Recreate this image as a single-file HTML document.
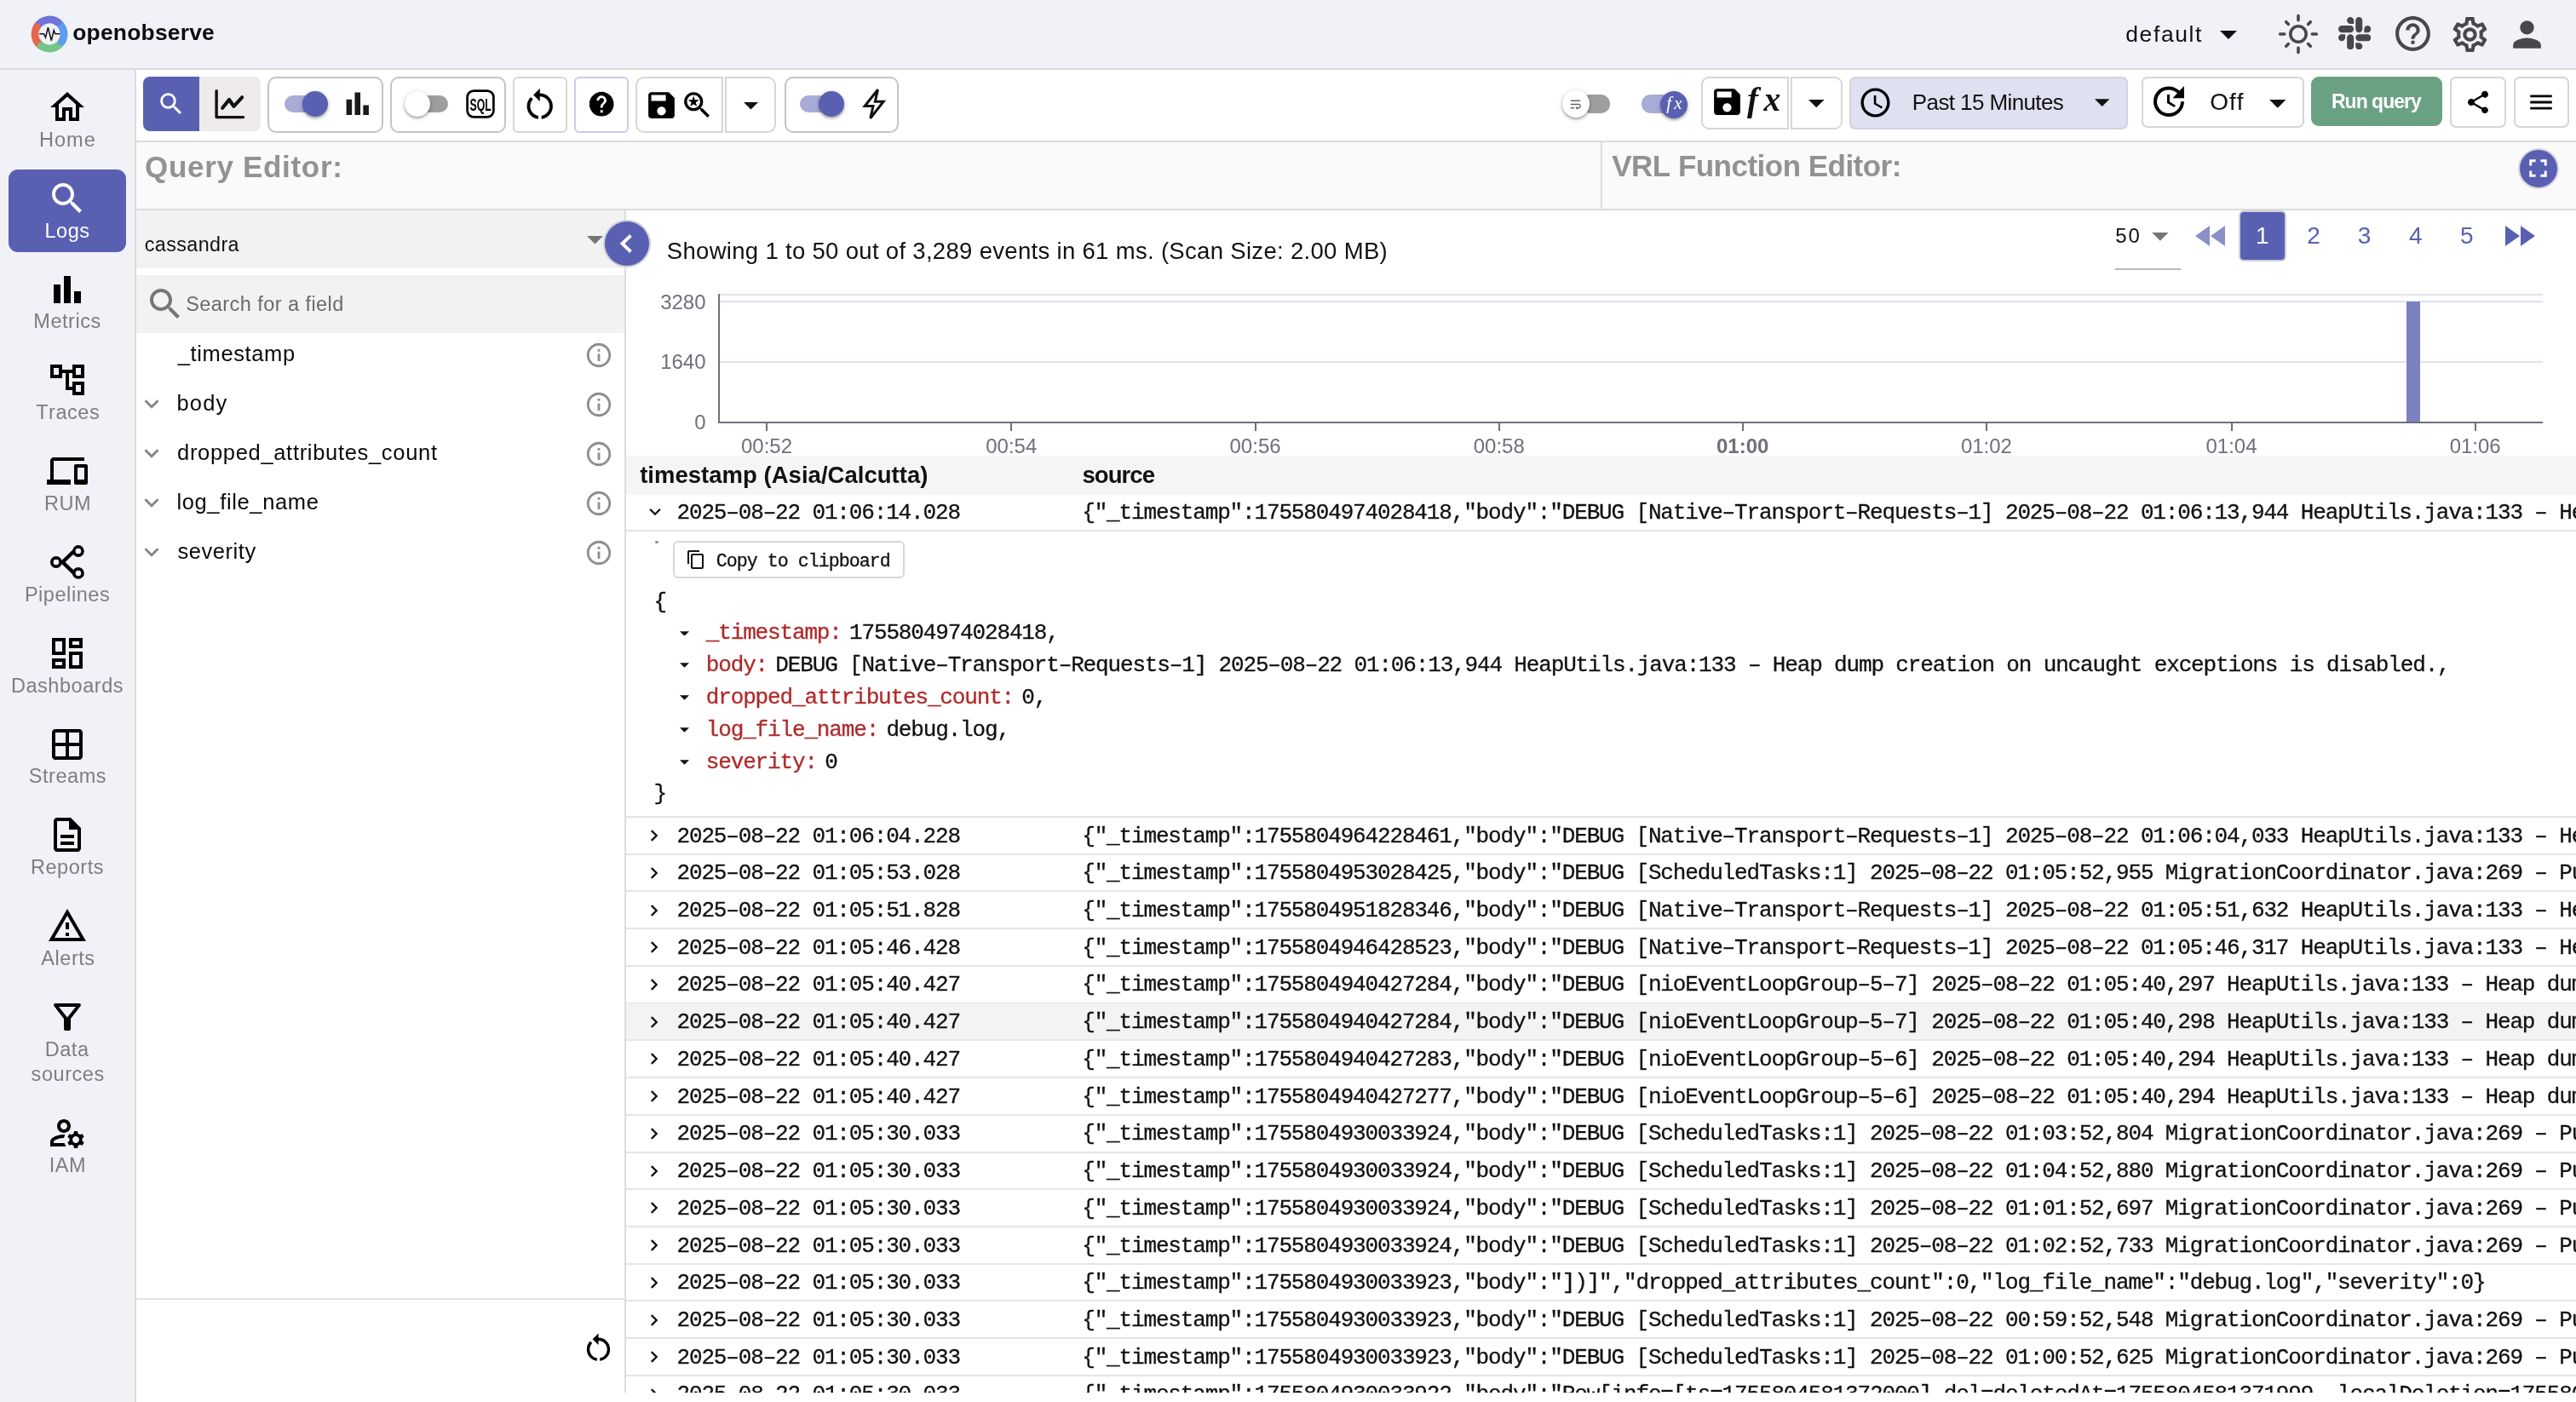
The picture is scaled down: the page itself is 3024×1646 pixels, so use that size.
<!DOCTYPE html>
<html><head><meta charset="utf-8"><title>OpenObserve</title><style>
html,body{margin:0;padding:0;background:#fff;}
body{width:3024px;height:1646px;overflow:hidden;position:relative;font-kerning:none;-webkit-font-smoothing:antialiased;}
#root{position:absolute;left:0;top:0;width:3024px;height:1646px;overflow:hidden;will-change:transform;transform:translateZ(0);}
.a{position:absolute;display:block;}
.t{position:absolute;white-space:pre;font-kerning:none;}
.s{font-family:"Liberation Sans",sans-serif;}
.m{font-family:"Liberation Mono",monospace;-webkit-text-stroke:0.3px;}
.r{font-family:"Liberation Serif",serif;}
</style></head><body><div id="root">
<div class="a" style="left:0px;top:0px;width:3024px;height:80px;background:#f1f2f8;"></div>
<div class="a" style="left:0px;top:80px;width:3024px;height:2px;background:#dbdbdb;"></div>
<div class="a" style="left:0px;top:82px;width:158px;height:1564px;background:#f1f2f8;"></div>
<div class="a" style="left:158px;top:82px;width:2px;height:1564px;background:#dbdbdb;"></div>
<svg class="a" style="left:36.4px;top:18px;" width="44" height="44" viewBox="0 0 44 44"><g fill="none" stroke-width="8.8"><path d="M6.99 14.02A17.0 17.0 0 0 1 31.99 8.25" stroke="#6f74dc"/><path d="M31.51 7.91A17.0 17.0 0 0 1 36.26 31.26" stroke="#5a9cf0"/><path d="M36.57 30.76A17.0 17.0 0 0 1 12.01 35.75" stroke="#72c687"/><path d="M12.49 36.09A17.0 17.0 0 0 1 7.28 13.50" stroke="#e5654f"/></g><circle cx="31.75" cy="8.07" r="4.4" fill="#6f74dc"/><circle cx="36.42" cy="31.01" r="4.4" fill="#5a9cf0"/><circle cx="12.25" cy="35.93" r="4.4" fill="#72c687"/><circle cx="7.28" cy="13.50" r="4.4" fill="#e5654f"/><path d="M10.2 21.700h5.300l2 4.300 2.900-11.800 3.900 15.500 2.900-12.100 1.600 4.100h5.700" fill="none" stroke="#111" stroke-width="1.5"/></svg>
<div class="t s" style="left:85.27px;top:25px;font-size:26.4px;line-height:26.4px;color:#0e0e10;font-weight:700;letter-spacing:0.222px;">openobserve</div>
<div class="t s" style="left:2495.29px;top:27px;font-size:26.5px;line-height:26.5px;color:#111;letter-spacing:1.590px;">default</div>
<svg class="a" style="left:2606px;top:36px;" width="20" height="10" viewBox="0 0 20 10"><path d="M0 0h20L10 10z" fill="#111"/></svg>
<svg class="a" style="left:2674px;top:16px;" width="48" height="48" viewBox="0 0 48 48"><g stroke="#48484b" fill="none" stroke-width="3.6" stroke-linecap="round">
<circle cx="24" cy="24" r="9.2"/>
<path d="M24 2.6v5.2M24 40.2v5.200M2.600 24h5.200M40.200 24h5.200M9.700 9.700l2.700 2.700M35.600 35.600l2.700 2.700M9.700 38.300l2.700-2.700M35.600 12.400l2.700-2.700"/></g></svg>
<svg class="a" style="left:2744.6px;top:19.8px;" width="38.4" height="38.4" viewBox="0 0 122.8 122.8"><g fill="#48484b">
<path d="M25.8 77.6c0 7.1-5.8 12.9-12.9 12.9S0 84.7 0 77.6s5.8-12.9 12.9-12.9h12.9v12.9zm6.500 0c0-7.100 5.800-12.900 12.900-12.900s12.900 5.800 12.900 12.900v32.300c0 7.100-5.800 12.900-12.900 12.900s-12.900-5.800-12.900-12.900V77.600z"/>
<path d="M45.200 25.800c-7.100 0-12.900-5.800-12.900-12.900S38.100 0 45.200 0s12.900 5.800 12.900 12.900v12.900H45.200zm0 6.500c7.100 0 12.900 5.800 12.900 12.900s-5.800 12.900-12.900 12.900H12.900C5.800 58.100 0 52.300 0 45.200s5.800-12.900 12.900-12.900h32.300z"/>
<path d="M97 45.200c0-7.100 5.800-12.900 12.900-12.900s12.900 5.800 12.900 12.900-5.800 12.900-12.900 12.900H97V45.200zm-6.500 0c0 7.100-5.800 12.900-12.900 12.900s-12.900-5.800-12.900-12.900V12.900C64.700 5.800 70.500 0 77.600 0s12.900 5.800 12.900 12.900v32.300z"/>
<path d="M77.600 97c7.100 0 12.900 5.800 12.900 12.900s-5.800 12.900-12.900 12.900-12.900-5.800-12.900-12.900V97h12.900zm0-6.500c-7.100 0-12.900-5.800-12.900-12.900s5.800-12.900 12.900-12.900h32.300c7.100 0 12.900 5.800 12.900 12.900s-5.800 12.900-12.900 12.900H77.600z"/>
</g></svg>
<svg class="a" style="left:2807.5px;top:15.3px;" width="49" height="49" viewBox="0 0 24 24"><path fill="#48484b" d="M11 18h2v-2h-2v2zm1-16C6.48 2 2 6.48 2 12s4.48 10 10 10 10-4.48 10-10S17.52 2 12 2zm0 18c-4.41 0-8-3.59-8-8s3.59-8 8-8 8 3.59 8 8-3.59 8-8 8zm0-14c-2.21 0-4 1.79-4 4h2c0-1.1.9-2 2-2s2 .9 2 2c0 2-3 1.75-3 5h2c0-2.25 3-2.5 3-5 0-2.21-1.79-4-4-4z"/></svg>
<svg class="a" style="left:2874.5px;top:15.7px;" width="49" height="49" viewBox="0 0 24 24"><path fill="#48484b" d="M19.43 12.98c.04-.32.07-.64.07-.98 0-.34-.03-.66-.07-.98l2.11-1.65c.19-.15.24-.42.12-.64l-2-3.46c-.09-.16-.26-.25-.44-.25-.06 0-.12.01-.17.03l-2.49 1c-.52-.4-1.08-.73-1.69-.98l-.38-2.65C14.46 2.18 14.25 2 14 2h-4c-.25 0-.46.18-.49.42l-.38 2.65c-.61.25-1.17.59-1.69.98l-2.49-1c-.06-.02-.12-.03-.18-.03-.17 0-.34.09-.43.25l-2 3.46c-.13.22-.07.49.12.64l2.11 1.65c-.04.32-.07.65-.07.98 0 .33.03.66.07.98l-2.11 1.65c-.19.15-.24.42-.12.64l2 3.46c.09.16.26.25.44.25.06 0 .12-.01.17-.03l2.49-1c.52.4 1.08.73 1.69.98l.38 2.65c.03.24.24.42.49.42h4c.25 0 .46-.18.49-.42l.38-2.65c.61-.25 1.17-.59 1.69-.98l2.49 1c.06.02.12.03.18.03.17 0 .34-.09.43-.25l2-3.46c.12-.22.07-.49-.12-.64l-2.11-1.65zm-1.98-1.71c.04.31.05.52.05.73 0 .21-.02.43-.05.73l-.14 1.13.89.7 1.08.84-.7 1.21-1.27-.51-1.04-.42-.9.68c-.43.32-.84.56-1.25.73l-1.06.43-.16 1.13-.2 1.35h-1.4l-.19-1.35-.16-1.13-1.06-.43c-.43-.18-.83-.41-1.23-.71l-.91-.7-1.06.43-1.27.51-.7-1.21 1.08-.84.89-.7-.14-1.13c-.03-.31-.05-.54-.05-.74s.02-.43.05-.73l.14-1.13-.89-.7-1.08-.84.7-1.21 1.27.51 1.04.42.9-.68c.43-.32.84-.56 1.25-.73l1.06-.43.16-1.13.2-1.35h1.39l.19 1.35.16 1.13 1.06.43c.43.18.83.41 1.23.71l.91.7 1.06-.43 1.27-.51.7 1.21-1.07.85-.89.7.14 1.13zM12 8c-2.21 0-4 1.79-4 4s1.79 4 4 4 4-1.79 4-4-1.79-4-4-4zm0 6c-1.1 0-2-.9-2-2s.9-2 2-2 2 .9 2 2-.9 2-2 2z"/></svg>
<svg class="a" style="left:2942.2px;top:15.5px;" width="49" height="49" viewBox="0 0 24 24"><path fill="#48484b" d="M12 12c2.21 0 4-1.79 4-4s-1.79-4-4-4-4 1.79-4 4 1.79 4 4 4zm0 2c-2.67 0-8 1.34-8 4v2h16v-2c0-2.66-5.33-4-8-4z"/></svg>
<div class="a" style="left:10px;top:198.5px;width:138px;height:97.5px;background:#5960b2;border-radius:11px;"></div>
<svg class="a" style="left:55px;top:102.0px;" width="48" height="48" viewBox="0 0 24 24"><path fill="#000" d="M12 5.69l5 4.5V18h-2v-6H9v6H7v-7.81l5-4.5M12 3L2 12h3v8h6v-6h2v6h6v-8h3L12 3z"/></svg>
<div class="t s" style="left:46.02px;top:153px;font-size:23.5px;line-height:23.5px;color:#7e7e7e;letter-spacing:1.0px;">Home</div>
<svg class="a" style="left:55px;top:208.8px;" width="48" height="48" viewBox="0 0 24 24"><path fill="#fff" d="M15.5 14h-.79l-.28-.27C15.41 12.59 16 11.11 16 9.5 16 5.91 13.09 3 9.5 3S3 5.91 3 9.5 5.91 16 9.5 16c1.61 0 3.09-.59 4.23-1.57l.27.28v.79l5 4.99L20.49 19l-4.99-5zm-6 0C7.01 14 5 11.99 5 9.5S7.01 5 9.5 5 14 7.01 14 9.5 11.99 14 9.5 14z"/></svg>
<div class="t s" style="left:52.46px;top:260px;font-size:23.5px;line-height:23.5px;color:#fff;letter-spacing:0.55px;">Logs</div>
<svg class="a" style="left:55px;top:315.6px;" width="48" height="48" viewBox="0 0 24 24"><path fill="#000" d="M4 9h4v11H4zm12 4h4v7h-4zm-6-9h4v16h-4z"/></svg>
<div class="t s" style="left:39.25px;top:366px;font-size:23.5px;line-height:23.5px;color:#7e7e7e;letter-spacing:0.55px;">Metrics</div>
<svg class="a" style="left:55px;top:422.4px;" width="48" height="48" viewBox="0 0 24 24"><path fill="#000" d="M22 11V3h-7v3H9V3H2v8h7V8h2v10h4v3h7v-8h-7v3h-2V8h2v3h7zM7 9H4V5h3v4zm10 6h3v4h-3v-4zm0-10h3v4h-3V5z"/></svg>
<div class="t s" style="left:42.18px;top:473px;font-size:23.5px;line-height:23.5px;color:#7e7e7e;letter-spacing:0.55px;">Traces</div>
<svg class="a" style="left:55px;top:529.2px;" width="48" height="48" viewBox="0 0 24 24"><path fill="#000" d="M4 6h18V4H4c-1.1 0-2 .9-2 2v11H0v3h14v-3H4V6zm19 2h-6c-.55 0-1 .45-1 1v10c0 .55.45 1 1 1h6c.55 0 1-.45 1-1V9c0-.55-.45-1-1-1zm-1 9h-4v-7h4v7z"/></svg>
<div class="t s" style="left:51.99px;top:580px;font-size:23.5px;line-height:23.5px;color:#7e7e7e;letter-spacing:0.55px;">RUM</div>
<svg class="a" style="left:55px;top:636.0px;" width="48" height="48" viewBox="0 0 48 48"><g fill="none" stroke="#000"><path d="M10.900 24h7.600M31.900 11.020L18.500 24l13.400 12.950" stroke-width="4.400"/><circle cx="10.900" cy="24" r="5.100" stroke-width="3.600" fill="#f1f2f8"/><circle cx="36.900" cy="11.020" r="5.100" stroke-width="3.600" fill="#f1f2f8"/><circle cx="36.900" cy="36.950" r="5.100" stroke-width="3.600" fill="#f1f2f8"/></g></svg>
<div class="t s" style="left:28.88px;top:687px;font-size:23.5px;line-height:23.5px;color:#7e7e7e;letter-spacing:0.55px;">Pipelines</div>
<svg class="a" style="left:55px;top:742.8px;" width="48" height="48" viewBox="0 0 24 24"><path fill="#000" d="M19 5v2h-4V5h4M9 5v6H5V5h4m10 8v6h-4v-6h4M9 17v2H5v-2h4M21 3h-8v6h8V3zM11 3H3v10h8V3zm10 8h-8v10h8V11zm-10 4H3v6h8v-6z"/></svg>
<div class="t s" style="left:12.93px;top:794px;font-size:23.5px;line-height:23.5px;color:#7e7e7e;letter-spacing:0.55px;">Dashboards</div>
<svg class="a" style="left:55px;top:849.6px;" width="48" height="48" viewBox="0 0 24 24"><path fill="#000" d="M19 3H5c-1.1 0-2 .9-2 2v14c0 1.1.9 2 2 2h14c1.1 0 2-.9 2-2V5c0-1.1-.9-2-2-2zm0 2v6h-6V5h6zm-8 0v6H5V5h6zm-6 8h6v6H5v-6zm8 6v-6h6v6h-6z"/></svg>
<div class="t s" style="left:33.79px;top:900px;font-size:23.5px;line-height:23.5px;color:#7e7e7e;letter-spacing:0.55px;">Streams</div>
<svg class="a" style="left:55px;top:956.4px;" width="48" height="48" viewBox="0 0 24 24"><path fill="#000" d="M8 16h8v2H8zm0-4h8v2H8zm6-10H6c-1.1 0-2 .9-2 2v16c0 1.1.89 2 1.99 2H18c1.1 0 2-.9 2-2V8l-6-6zm4 18H6V4h7v5h5v11z"/></svg>
<div class="t s" style="left:35.97px;top:1007px;font-size:23.5px;line-height:23.5px;color:#7e7e7e;letter-spacing:0.55px;">Reports</div>
<svg class="a" style="left:55px;top:1063.1999999999998px;" width="48" height="48" viewBox="0 0 24 24"><path fill="#000" d="M12 5.99L19.53 19H4.47L12 5.99M12 2L1 21h22L12 2zm1 14h-2v2h2v-2zm0-6h-2v4h2v-4z"/></svg>
<div class="t s" style="left:48.29px;top:1114px;font-size:23.5px;line-height:23.5px;color:#7e7e7e;letter-spacing:0.55px;">Alerts</div>
<svg class="a" style="left:55px;top:1170.0px;" width="48" height="48" viewBox="0 0 24 24"><path fill="#000" d="M7 6h10l-5.01 6.3L7 6zm-2.75-.39C6.27 8.2 10 13 10 13v6c0 .55.45 1 1 1h2c.55 0 1-.45 1-1v-6s3.72-4.8 5.74-7.39c.51-.66.04-1.61-.79-1.61H5.04c-.83 0-1.3.95-.79 1.61z"/></svg>
<div class="t s" style="left:52.69px;top:1221px;font-size:23.5px;line-height:23.5px;color:#7e7e7e;letter-spacing:0.55px;">Data</div>
<div class="t s" style="left:36.61px;top:1250px;font-size:23.5px;line-height:23.5px;color:#7e7e7e;letter-spacing:0.55px;">sources</div>
<svg class="a" style="left:55px;top:1306.2px;" width="48" height="48" viewBox="0 0 24 24"><path fill="#000" d="M4 18v-.65c0-.34.16-.66.41-.81C6.1 15.53 8.03 15 10 15c.03 0 .05 0 .08.01.1-.7.3-1.37.59-1.98-.22-.02-.44-.03-.67-.03-2.42 0-4.68.67-6.61 1.82-.88.52-1.39 1.5-1.39 2.53V20h9.26c-.42-.6-.75-1.28-.97-2H4zm6-6c2.21 0 4-1.79 4-4s-1.79-4-4-4-4 1.79-4 4 1.79 4 4 4zm0-6c1.1 0 2 .9 2 2s-.9 2-2 2-2-.9-2-2 .9-2 2-2zm10.75 10c0-.22-.03-.42-.06-.63l1.14-1.01-1-1.73-1.45.49c-.32-.27-.68-.48-1.08-.63L18 11h-2l-.3 1.49c-.4.15-.76.36-1.08.63l-1.45-.49-1 1.73 1.14 1.01c-.03.21-.06.41-.06.63s.03.42.06.63l-1.14 1.01 1 1.73 1.45-.49c.32.27.68.48 1.08.63L16 21h2l.3-1.49c.4-.15.76-.36 1.08-.63l1.45.49 1-1.73-1.14-1.01c.03-.21.06-.41.06-.63zM17 18c-1.1 0-2-.9-2-2s.9-2 2-2 2 .9 2 2-.9 2-2 2z"/></svg>
<div class="t s" style="left:57.74px;top:1357px;font-size:23.5px;line-height:23.5px;color:#7e7e7e;letter-spacing:0.55px;">IAM</div>
<div class="a" style="left:160px;top:82px;width:2864px;height:83px;background:#fff;"></div>
<div class="a" style="left:160px;top:165px;width:2864px;height:2px;background:#dbdbdb;"></div>
<div class="a" style="left:168px;top:90px;width:66px;height:64px;background:#5960b2;border-radius:8px 0 0 8px;"></div>
<div class="a" style="left:234px;top:90px;width:72px;height:64px;background:#eeebea;border-radius:0 8px 8px 0;"></div>
<svg class="a" style="left:184px;top:105px;" width="34" height="34" viewBox="0 0 24 24"><path fill="#fff" d="M15.5 14h-.79l-.28-.27C15.41 12.59 16 11.11 16 9.5 16 5.91 13.09 3 9.5 3S3 5.91 3 9.5 5.91 16 9.5 16c1.61 0 3.09-.59 4.23-1.57l.27.28v.79l5 4.99L20.49 19l-4.99-5zm-6 0C7.01 14 5 11.99 5 9.5S7.01 5 9.5 5 14 7.01 14 9.5 11.99 14 9.5 14z"/></svg>
<svg class="a" style="left:246px;top:100px;" width="46" height="44" viewBox="0 0 46 44"><path d="M8.100 6.800v30.800h31.500" fill="none" stroke="#111" stroke-width="3.4" stroke-linecap="round" stroke-linejoin="round"/><path d="M15.200 26.800l7.800-9.800 5.400 7.800 9.700-10.500" fill="none" stroke="#111" stroke-width="4.200" stroke-linecap="round" stroke-linejoin="round"/></svg>
<div class="a" style="left:314px;top:90px;width:136px;height:66px;background:#fff;box-sizing:border-box;border:2px solid #c4c4c4;border-radius:10px;"></div>
<div class="a" style="left:334px;top:111.8px;width:50px;height:20.4px;background:#a9acd7;border-radius:10.2px;"></div><div class="a" style="left:355px;top:107px;width:30px;height:30px;background:#5960b2;border-radius:50%;box-shadow:0 2px 3px rgba(0,0,0,.28),0 1px 6px rgba(0,0,0,.16);"></div>
<svg class="a" style="left:400.2px;top:102.2px;" width="39.5" height="39.5" viewBox="0 0 24 24"><path fill="#1a1a1a" d="M4 9h4v11H4zm12 4h4v7h-4zm-6-9h4v16h-4z"/></svg>
<div class="a" style="left:458px;top:90px;width:136px;height:66px;background:#fff;box-sizing:border-box;border:2px solid #c4c4c4;border-radius:10px;"></div>
<div class="a" style="left:476px;top:111.8px;width:50px;height:20.4px;background:#9e9e9e;border-radius:10.2px;"></div><div class="a" style="left:475px;top:107px;width:30px;height:30px;background:#fff;border-radius:50%;box-shadow:0 2px 3px rgba(0,0,0,.28),0 1px 6px rgba(0,0,0,.16);"></div>
<svg class="a" style="left:547px;top:105px;" width="34" height="34" viewBox="0 0 34 34"><rect x="1.6" y="1.6" width="30.800" height="30.800" rx="7.500" fill="none" stroke="#000" stroke-width="2.7"/></svg>
<div class="t s" style="left:551.01px;top:113px;font-size:20.5px;line-height:20.5px;color:#000;font-weight:700;transform:scaleX(0.6);transform-origin:1.35px 50%;">SQL</div>
<div class="a" style="left:602px;top:90px;width:64px;height:66px;background:#fff;box-sizing:border-box;border:2px solid #d6d6d6;border-radius:6px;"></div>
<svg class="a" style="left:611.45px;top:99.9px;" width="45.5" height="45.5" viewBox="0 0 24 24"><path fill="#000" d="M12 5V2L8 6l4 4V7c3.31 0 6 2.69 6 6 0 2.97-2.17 5.43-5 5.91v2.02c3.95-.49 7-3.85 7-7.93 0-4.42-3.58-8-8-8zm-6 8c0-1.65.67-3.15 1.76-4.24L6.34 7.34C4.9 8.79 4 10.79 4 13c0 4.08 3.05 7.44 7 7.93v-2.02c-2.83-.48-5-2.94-5-5.91z"/></svg>
<div class="a" style="left:674px;top:90px;width:64px;height:66px;background:#fff;box-sizing:border-box;border:2px solid #c9cbe8;border-radius:6px;"></div>
<svg class="a" style="left:689.3px;top:104.8px;" width="34.4" height="34.4" viewBox="0 0 24 24"><path fill="#000" d="M12 2C6.48 2 2 6.48 2 12s4.48 10 10 10 10-4.48 10-10S17.52 2 12 2zm1 17h-2v-2h2v2zm2.07-7.75l-.9.92C13.45 12.9 13 13.5 13 15h-2v-.5c0-1.1.45-2.1 1.17-2.83l1.24-1.26c.37-.36.59-.86.59-1.41 0-1.1-.9-2-2-2s-2 .9-2 2H8c0-2.21 1.79-4 4-4s4 1.79 4 4c0 .88-.36 1.68-.93 2.25z"/></svg>
<div class="a" style="left:746px;top:90px;width:102.5px;height:66px;background:#fff;box-sizing:border-box;border:2px solid #d6d6d6;border-radius:10px 0 0 10px;"></div>
<svg class="a" style="left:756px;top:102.8px;" width="41" height="41" viewBox="0 0 24 24"><path fill="#000" d="M17 3H5c-1.11 0-2 .9-2 2v14c0 1.1.89 2 2 2h14c1.1 0 2-.9 2-2V7l-4-4zm-5 16c-1.66 0-3-1.34-3-3s1.34-3 3-3 3 1.34 3 3-1.34 3-3 3zm3-10H5V5h10v4z"/></svg>
<svg class="a" style="left:797.7px;top:102.8px;" width="41" height="41" viewBox="0 0 24 24"><path fill="#000" d="M15.5 14h-.79l-.28-.27C15.41 12.59 16 11.11 16 9.5 16 5.91 13.09 3 9.5 3S3 5.91 3 9.5 5.91 16 9.5 16c1.61 0 3.09-.59 4.23-1.57l.27.28v.79l5 4.99L20.49 19l-4.99-5zm-6 0C7.01 14 5 11.99 5 9.5S7.01 5 9.5 5 14 7.01 14 9.5 11.99 14 9.5 14z"/></svg>
<svg class="a" style="left:797.7px;top:102.8px;" width="41" height="41" viewBox="0 0 24 24"><path fill="#000" d="M9.5 5.6l.92 2.8h2.95l-2.4 1.72.93 2.82L9.5 11.2l-2.4 1.74.93-2.82-2.4-1.72h2.95z"/></svg>
<div class="a" style="left:851px;top:90px;width:60px;height:66px;background:#fff;box-sizing:border-box;border:2px solid #d6d6d6;border-radius:0 10px 10px 0;"></div>
<svg class="a" style="left:872.6px;top:120px;" width="17" height="8.7" viewBox="0 0 20 10"><path d="M0 0h20L10 10z" fill="#111"/></svg>
<div class="a" style="left:921px;top:90px;width:134px;height:66px;background:#fff;box-sizing:border-box;border:2px solid #c4c4c4;border-radius:10px;"></div>
<div class="a" style="left:939.4px;top:111.6px;width:50.60000000000002px;height:20.4px;background:#a9acd7;border-radius:10.2px;"></div><div class="a" style="left:960.7px;top:106.8px;width:30px;height:30px;background:#5960b2;border-radius:50%;box-shadow:0 2px 3px rgba(0,0,0,.28),0 1px 6px rgba(0,0,0,.16);"></div>
<svg class="a" style="left:1010px;top:102px;" width="32" height="40" viewBox="0 0 32 40"><path d="M20.500 3.200L5.200 22.500h9.800l-3.200 14.300 15.300-19.600h-9.800z" fill="none" stroke="#111" stroke-width="3" stroke-linejoin="miter"/></svg>
<div class="a" style="left:1856px;top:111.3px;width:33.5px;height:21.4px;background:#9e9e9e;border-radius:10.7px;"></div>
<div class="a" style="left:1833.8px;top:106px;width:32px;height:32px;background:#fff;border-radius:50%;box-shadow:0 2px 3px rgba(0,0,0,.28),0 1px 6px rgba(0,0,0,.16);"></div>
<svg class="a" style="left:1841.3px;top:113.5px;" width="17" height="17" viewBox="0 0 24 24"><path fill="#666" d="M4 19h6v-2H4v2zM20 5H4v2h16V5zm-3 6H4v2h13.250c1.1 0 2 .9 2 2s-.9 2-2 2H15v-2l-3 3 3 3v-2h2c2.210 0 4-1.790 4-4s-1.790-4-4-4z"/></svg>
<div class="a" style="left:1927px;top:111.3px;width:40px;height:21.4px;background:#a9acd7;border-radius:10.7px;"></div>
<div class="a" style="left:1949px;top:107px;width:32px;height:32px;background:#5960b2;border-radius:50%;box-shadow:0 2px 3px rgba(0,0,0,.28),0 1px 6px rgba(0,0,0,.16);"></div>
<div class="t r" style="left:1956.26px;top:111px;font-size:21px;line-height:21px;color:#fff;font-style:italic;letter-spacing:3.234px;">fx</div>
<div class="a" style="left:1997px;top:90px;width:103px;height:62px;background:#fff;box-sizing:border-box;border:2px solid #d6d6d6;border-radius:9px 0 0 9px;"></div>
<svg class="a" style="left:2006.7px;top:99.4px;" width="41" height="41" viewBox="0 0 24 24"><path fill="#000" d="M17 3H5c-1.11 0-2 .9-2 2v14c0 1.1.89 2 2 2h14c1.1 0 2-.9 2-2V7l-4-4zm-5 16c-1.66 0-3-1.34-3-3s1.34-3 3-3 3 1.34 3 3-1.34 3-3 3zm3-10H5V5h10v4z"/></svg>
<div class="t r" style="left:2051.00px;top:98px;font-size:39.5px;line-height:39.5px;color:#111;font-weight:700;font-style:italic;letter-spacing:6.361px;">fx</div>
<div class="a" style="left:2102px;top:90px;width:61px;height:62px;background:#fff;box-sizing:border-box;border:2px solid #d6d6d6;border-radius:0 9px 9px 0;"></div>
<svg class="a" style="left:2122.8px;top:117px;" width="18.5" height="9.3" viewBox="0 0 20 10"><path d="M0 0h20L10 10z" fill="#111"/></svg>
<div class="a" style="left:2171px;top:90px;width:326.5px;height:62px;background:#dfe0f0;box-sizing:border-box;border:2px solid #d2d3de;border-radius:7px;"></div>
<svg class="a" style="left:2180.5px;top:100px;" width="41" height="41" viewBox="0 0 24 24"><path fill="#000" d="M11.99 2C6.47 2 2 6.48 2 12s4.47 10 9.99 10C17.52 22 22 17.520 22 12S17.52 2 11.99 2zM12 20c-4.42 0-8-3.58-8-8s3.58-8 8-8 8 3.58 8 8-3.58 8-8 8zm.5-13H11v6l5.25 3.15.75-1.23-4.5-2.67z"/></svg>
<div class="t s" style="left:2244.87px;top:107px;font-size:26px;line-height:26px;color:#111;letter-spacing:-0.604px;">Past 15 Minutes</div>
<svg class="a" style="left:2458.8px;top:116.3px;" width="17.5" height="9.3" viewBox="0 0 20 10"><path d="M0 0h20L10 10z" fill="#111"/></svg>
<div class="a" style="left:2513.5px;top:90px;width:191px;height:60px;background:#fff;box-sizing:border-box;border:2px solid #d6d6d6;border-radius:7px;"></div>
<svg class="a" style="left:2521.5px;top:95px;" width="48" height="48" viewBox="0 0 24 24"><path fill="#000" d="M21 10.12h-6.78l2.74-2.82c-2.73-2.7-7.15-2.8-9.88-.1-2.73 2.71-2.73 7.08 0 9.79s7.15 2.71 9.88 0C18.32 15.65 19 14.08 19 12.1h2c0 1.98-.88 4.55-2.64 6.29-3.51 3.48-9.21 3.48-12.72 0-3.5-3.47-3.53-9.11-.02-12.580s9.140-3.470 12.650 0L21 3v7.120zM12.5 8v4.250l3.500 2.080-.720 1.210L11 13V8h1.500z"/></svg>
<div class="t s" style="left:2594.17px;top:106px;font-size:28px;line-height:28px;color:#111;letter-spacing:0.974px;">Off</div>
<svg class="a" style="left:2664px;top:117px;" width="19.5" height="9.7" viewBox="0 0 20 10"><path d="M0 0h20L10 10z" fill="#111"/></svg>
<div class="a" style="left:2713px;top:90px;width:154px;height:58px;background:#6ba183;border-radius:9px;"></div>
<div class="t s" style="left:2736.96px;top:108px;font-size:23px;line-height:23px;color:#fff;font-weight:700;letter-spacing:-0.984px;">Run query</div>
<div class="a" style="left:2875.5px;top:90px;width:66px;height:60px;background:#fff;box-sizing:border-box;border:2px solid #d6d6d6;border-radius:7px;"></div>
<svg class="a" style="left:2892.5px;top:104px;" width="32" height="32" viewBox="0 0 24 24"><path fill="#000" d="M18 16.08c-.76 0-1.44.3-1.96.77L8.91 12.7c.05-.23.09-.46.09-.7s-.04-.47-.09-.7l7.05-4.11c.54.5 1.25.81 2.04.81 1.66 0 3-1.34 3-3s-1.34-3-3-3-3 1.34-3 3c0 .24.04.47.09.7L8.04 9.81C7.5 9.31 6.79 9 6 9c-1.66 0-3 1.34-3 3s1.34 3 3 3c.79 0 1.5-.31 2.04-.81l7.12 4.16c-.05.21-.08.43-.08.65 0 1.61 1.31 2.92 2.92 2.92 1.61 0 2.92-1.31 2.92-2.92s-1.31-2.92-2.92-2.92z"/></svg>
<div class="a" style="left:2950.5px;top:90px;width:65.5px;height:60px;background:#fff;box-sizing:border-box;border:2px solid #d6d6d6;border-radius:7px;"></div>
<svg class="a" style="left:2966px;top:103px;" width="34" height="34" viewBox="0 0 24 24"><path fill="#000" d="M3 18h18v-2H3v2zm0-5h18v-2H3v2zm0-7v2h18V6H3z"/></svg>
<div class="a" style="left:160px;top:167px;width:2864px;height:78px;background:#fafafa;"></div>
<div class="a" style="left:160px;top:245px;width:2864px;height:2px;background:#dbdbdb;"></div>
<div class="a" style="left:1878.5px;top:167px;width:2px;height:79px;background:#dcdcdc;"></div>
<div class="t s" style="left:170.06px;top:178px;font-size:35px;line-height:35px;color:#929292;font-weight:700;letter-spacing:0.680px;">Query Editor:</div>
<div class="t s" style="left:1892.26px;top:177px;font-size:35px;line-height:35px;color:#929292;font-weight:700;letter-spacing:-0.518px;">VRL Function Editor:</div>
<div class="a" style="left:2956px;top:173.7px;width:48.2px;height:48.2px;background:#5960b2;border-radius:50%;box-sizing:border-box;border:2px solid #d6d6da;"></div>
<svg class="a" style="left:2962.4px;top:180.45px;" width="35" height="35" viewBox="0 0 24 24"><path fill="#fff" d="M7 14H5v5h5v-2H7v-3zm-2-4h2V7h3V5H5v5zm12 7h-3v2h5v-5h-2v3zM14 5v2h3v3h2V5h-5z"/></svg>
<div class="a" style="left:160px;top:247px;width:573px;height:67.5px;background:#f2f2f2;"></div>
<div class="t s" style="left:169.81px;top:276px;font-size:23.3px;line-height:23.3px;color:#111;letter-spacing:0.411px;">cassandra</div>
<svg class="a" style="left:689px;top:277.3px;" width="19" height="9.5" viewBox="0 0 20 10"><path d="M0 0h20L10 10z" fill="#757575"/></svg>
<div class="a" style="left:160px;top:323px;width:573px;height:67.8px;background:#f2f2f2;"></div>
<svg class="a" style="left:170px;top:333px;" width="48" height="48" viewBox="0 0 24 24"><path fill="#757575" d="M15.5 14h-.79l-.28-.27C15.41 12.59 16 11.11 16 9.5 16 5.91 13.09 3 9.5 3S3 5.91 3 9.5 5.91 16 9.5 16c1.61 0 3.09-.59 4.23-1.57l.27.28v.79l5 4.99L20.49 19l-4.99-5zm-6 0C7.01 14 5 11.99 5 9.5S7.01 5 9.5 5 14 7.01 14 9.5 11.99 14 9.5 14z"/></svg>
<div class="t s" style="left:218.13px;top:346px;font-size:23.5px;line-height:23.5px;color:#6b6b6b;letter-spacing:0.443px;">Search for a field</div>
<div class="t s" style="left:208.79px;top:403px;font-size:25.5px;line-height:25.5px;color:#0a0a0a;letter-spacing:0.610px;">_timestamp</div>
<svg class="a" style="left:686px;top:400.2px;" width="34" height="34" viewBox="0 0 24 24"><path fill="#8e8e8e" d="M11 7h2v2h-2zm0 4h2v6h-2zm1-9C6.48 2 2 6.48 2 12s4.48 10 10 10 10-4.48 10-10S17.52 2 12 2zm0 18c-4.41 0-8-3.59-8-8s3.59-8 8-8 8 3.59 8 8-3.59 8-8 8z"/></svg>
<div class="t s" style="left:207.46px;top:461px;font-size:25.5px;line-height:25.5px;color:#0a0a0a;letter-spacing:1.199px;">body</div>
<svg class="a" style="left:686px;top:458.1px;" width="34" height="34" viewBox="0 0 24 24"><path fill="#8e8e8e" d="M11 7h2v2h-2zm0 4h2v6h-2zm1-9C6.48 2 2 6.48 2 12s4.48 10 10 10 10-4.48 10-10S17.52 2 12 2zm0 18c-4.41 0-8-3.59-8-8s3.59-8 8-8 8 3.59 8 8-3.59 8-8 8z"/></svg>
<svg class="a" style="left:161px;top:456.8px;" width="34" height="34" viewBox="0 0 24 24"><path fill="#858585" d="M16.59 8.59L12 13.17 7.41 8.59 6 10l6 6 6-6z"/></svg>
<div class="t s" style="left:208.03px;top:519px;font-size:25.5px;line-height:25.5px;color:#0a0a0a;letter-spacing:0.684px;">dropped_attributes_count</div>
<svg class="a" style="left:686px;top:516.0999999999999px;" width="34" height="34" viewBox="0 0 24 24"><path fill="#8e8e8e" d="M11 7h2v2h-2zm0 4h2v6h-2zm1-9C6.48 2 2 6.48 2 12s4.48 10 10 10 10-4.48 10-10S17.52 2 12 2zm0 18c-4.41 0-8-3.59-8-8s3.59-8 8-8 8 3.59 8 8-3.59 8-8 8z"/></svg>
<svg class="a" style="left:161px;top:514.8px;" width="34" height="34" viewBox="0 0 24 24"><path fill="#858585" d="M16.59 8.59L12 13.17 7.41 8.59 6 10l6 6 6-6z"/></svg>
<div class="t s" style="left:207.38px;top:577px;font-size:25.5px;line-height:25.5px;color:#0a0a0a;letter-spacing:0.648px;">log_file_name</div>
<svg class="a" style="left:686px;top:574.0px;" width="34" height="34" viewBox="0 0 24 24"><path fill="#8e8e8e" d="M11 7h2v2h-2zm0 4h2v6h-2zm1-9C6.48 2 2 6.48 2 12s4.48 10 10 10 10-4.48 10-10S17.52 2 12 2zm0 18c-4.41 0-8-3.59-8-8s3.59-8 8-8 8 3.59 8 8-3.59 8-8 8z"/></svg>
<svg class="a" style="left:161px;top:572.7px;" width="34" height="34" viewBox="0 0 24 24"><path fill="#858585" d="M16.59 8.59L12 13.17 7.41 8.59 6 10l6 6 6-6z"/></svg>
<div class="t s" style="left:208.39px;top:635px;font-size:25.5px;line-height:25.5px;color:#0a0a0a;letter-spacing:0.558px;">severity</div>
<svg class="a" style="left:686px;top:632.0px;" width="34" height="34" viewBox="0 0 24 24"><path fill="#8e8e8e" d="M11 7h2v2h-2zm0 4h2v6h-2zm1-9C6.48 2 2 6.48 2 12s4.48 10 10 10 10-4.48 10-10S17.52 2 12 2zm0 18c-4.41 0-8-3.59-8-8s3.59-8 8-8 8 3.59 8 8-3.59 8-8 8z"/></svg>
<svg class="a" style="left:161px;top:630.7px;" width="34" height="34" viewBox="0 0 24 24"><path fill="#858585" d="M16.59 8.59L12 13.17 7.41 8.59 6 10l6 6 6-6z"/></svg>
<div class="a" style="left:733px;top:247px;width:2px;height:1388px;background:#dcdcdc;"></div>
<div class="a" style="left:160px;top:1524px;width:573px;height:2px;background:#e2e2e2;"></div>
<svg class="a" style="left:681.5px;top:1562px;" width="41" height="41" viewBox="0 0 24 24"><path fill="#000" d="M12 5V2L8 6l4 4V7c3.31 0 6 2.69 6 6 0 2.97-2.17 5.43-5 5.91v2.02c3.95-.49 7-3.85 7-7.93 0-4.42-3.58-8-8-8zm-6 8c0-1.65.67-3.15 1.76-4.24L6.34 7.34C4.9 8.79 4 10.79 4 13c0 4.08 3.05 7.44 7 7.93v-2.02c-2.83-.48-5-2.94-5-5.91z"/></svg>
<div class="a" style="left:707.8px;top:257.6px;width:56.4px;height:56px;background:#5960b2;border-radius:50%;box-sizing:border-box;border:2px solid #d0d0d8;"></div>
<svg class="a" style="left:726px;top:273px;" width="20" height="26" viewBox="0 0 20 26"><path d="M14.500 3.500L4.500 13l10 9.500" fill="none" stroke="#fff" stroke-width="3.800"/></svg>
<div class="t s" style="left:782.75px;top:281px;font-size:27.5px;line-height:27.5px;color:#111;letter-spacing:0.315px;">Showing 1 to 50 out of 3,289 events in 61 ms. (Scan Size: 2.00 MB)</div>
<div class="t s" style="left:2483.24px;top:265px;font-size:24px;line-height:24px;color:#111;letter-spacing:1.803px;">50</div>
<svg class="a" style="left:2526.1px;top:273.2px;" width="19.8" height="9.7" viewBox="0 0 20 10"><path d="M0 0h20L10 10z" fill="#757575"/></svg>
<div class="a" style="left:2483px;top:315.1px;width:77px;height:2px;background:#b8b8b8;"></div>
<svg class="a" style="left:2572.1px;top:252.8px;" width="48" height="48" viewBox="0 0 24 24"><path fill="#8b8fc8" d="M11 18V6l-8.5 6 8.5 6zm.5-6l8.5 6V6l-8.5 6z"/></svg>
<div class="a" style="left:2628.1px;top:247.2px;width:55.6px;height:59.8px;background:#5960b2;border-radius:6px;box-sizing:border-box;border:2px solid #d0d0d8;"></div>
<div class="t s" style="left:2648.03px;top:263px;font-size:28px;line-height:28px;color:#fff;">1</div>
<div class="t s" style="left:2708.31px;top:263px;font-size:28px;line-height:28px;color:#5960b2;">2</div>
<div class="t s" style="left:2767.80px;top:263px;font-size:28px;line-height:28px;color:#5960b2;">3</div>
<div class="t s" style="left:2828.10px;top:263px;font-size:28px;line-height:28px;color:#5960b2;">4</div>
<div class="t s" style="left:2887.94px;top:263px;font-size:28px;line-height:28px;color:#5960b2;">5</div>
<svg class="a" style="left:2932.6px;top:252.8px;" width="48" height="48" viewBox="0 0 24 24"><path fill="#5960b2" d="M4 18l8.5-6L4 6v12zm9-12v12l8.5-6L13 6z"/></svg>
<div class="a" style="left:843.5px;top:345px;width:2141.5px;height:1.5px;background:#dfe2f2;"></div>
<div class="a" style="left:843.5px;top:353.3px;width:2141.5px;height:1.8px;background:#dfe2f2;"></div>
<div class="a" style="left:843.5px;top:424.4px;width:2141.5px;height:1.8px;background:#dfe2f2;"></div>
<div class="a" style="left:2825.2px;top:354px;width:16.3px;height:141.5px;background:#7b80c0;"></div>
<div class="a" style="left:842.6px;top:344.5px;width:2px;height:152px;background:#6e7079;"></div>
<div class="a" style="left:842.6px;top:494.7px;width:2142.5px;height:2px;background:#6e7079;"></div>
<div class="t s" style="left:775.15px;top:343px;font-size:24px;line-height:24px;color:#6e7079;">3280</div>
<div class="t s" style="left:775.15px;top:413px;font-size:24px;line-height:24px;color:#6e7079;">1640</div>
<div class="t s" style="left:815.19px;top:484px;font-size:24px;line-height:24px;color:#6e7079;">0</div>
<div class="a" style="left:898.9px;top:496px;width:2px;height:9.5px;background:#6e7079;"></div>
<div class="t s" style="left:870.01px;top:512px;font-size:24px;line-height:24px;color:#6e7079;">00:52</div>
<div class="a" style="left:1186.4px;top:496px;width:2px;height:9.5px;background:#6e7079;"></div>
<div class="t s" style="left:1157.25px;top:512px;font-size:24px;line-height:24px;color:#6e7079;">00:54</div>
<div class="a" style="left:1472.5px;top:496px;width:2px;height:9.5px;background:#6e7079;"></div>
<div class="t s" style="left:1443.53px;top:512px;font-size:24px;line-height:24px;color:#6e7079;">00:56</div>
<div class="a" style="left:1758.7px;top:496px;width:2px;height:9.5px;background:#6e7079;"></div>
<div class="t s" style="left:1729.72px;top:512px;font-size:24px;line-height:24px;color:#6e7079;">00:58</div>
<div class="a" style="left:2044.7px;top:496px;width:2px;height:9.5px;background:#6e7079;"></div>
<div class="t s" style="left:2015.03px;top:512px;font-size:24px;line-height:24px;color:#6e7079;font-weight:700;">01:00</div>
<div class="a" style="left:2330.8px;top:496px;width:2px;height:9.5px;background:#6e7079;"></div>
<div class="t s" style="left:2301.91px;top:512px;font-size:24px;line-height:24px;color:#6e7079;">01:02</div>
<div class="a" style="left:2618.6px;top:496px;width:2px;height:9.5px;background:#6e7079;"></div>
<div class="t s" style="left:2589.45px;top:512px;font-size:24px;line-height:24px;color:#6e7079;">01:04</div>
<div class="a" style="left:2904.6px;top:496px;width:2px;height:9.5px;background:#6e7079;"></div>
<div class="t s" style="left:2875.63px;top:512px;font-size:24px;line-height:24px;color:#6e7079;">01:06</div>
<div class="a" style="left:735px;top:535px;width:2289px;height:45.6px;background:#f5f5f5;"></div>
<div class="t s" style="left:751.16px;top:544px;font-size:27.5px;line-height:27.5px;color:#111;font-weight:700;letter-spacing:0.020px;">timestamp (Asia/Calcutta)</div>
<div class="t s" style="left:1270.53px;top:544px;font-size:27.5px;line-height:27.5px;color:#111;font-weight:700;letter-spacing:-0.955px;">source</div>
<div class="a" style="left:735px;top:580px;width:2289px;height:1055.300px;overflow:hidden"><div class="a" style="left:-735px;top:-580px;width:3024px;height:1646px">
<svg class="a" style="left:761px;top:595.4px;" width="16" height="12" viewBox="0 0 16 12"><path d="M2.100 2.800L8 8.700l5.900-5.900" fill="none" stroke="#111" stroke-width="2.300"/></svg><div class="t m" style="left:794.50px;top:589px;font-size:26px;line-height:26px;letter-spacing:-1.1525px;color:#111;">2025–08–22 01:06:14.028</div><div class="t m" style="left:1270.20px;top:589px;font-size:26px;line-height:26px;letter-spacing:-1.1525px;color:#111;">{"_timestamp":1755804974028418,"body":"DEBUG [Native–Transport–Requests–1] 2025–08–22 01:06:13,944 HeapUtils.java:133 – Heap dump creation on uncaught exceptions is disabled.","dropped_attributes_count":0,"log_file_name":"debug.log","severity":0}</div>
<div class="a" style="left:735px;top:622.4px;width:2289px;height:2px;background:#e4e4ea;"></div>
<div class="a" style="left:769.2px;top:634.8px;width:3.6px;height:3.6px;background:#8c8c8c;border-radius:50%;"></div>
<div class="a" style="left:789.5px;top:635.2px;width:272px;height:43.8px;background:#fff;box-sizing:border-box;border:2px solid #d6d6d6;border-radius:6px;"></div>
<svg class="a" style="left:804.5px;top:645px;" width="24" height="24" viewBox="0 0 24 24"><path fill="#111" d="M16 1H4c-1.1 0-2 .9-2 2v14h2V3h12V1zm3 4H8c-1.1 0-2 .9-2 2v14c0 1.1.9 2 2 2h11c1.1 0 2-.9 2-2V7c0-1.1-.9-2-2-2zm0 16H8V7h11v14z"/></svg>
<div class="t m" style="left:840.80px;top:649px;font-size:21.6px;line-height:21.6px;letter-spacing:-0.9575px;color:#111;">Copy to clipboard</div>
<div class="t m" style="left:767.50px;top:694px;font-size:26px;line-height:26px;letter-spacing:-1.1525px;color:#111;">{</div>
<svg class="a" style="left:797.8px;top:740.5999999999999px;" width="11" height="5.8" viewBox="0 0 20 10"><path d="M0 0h20L10 10z" fill="#111"/></svg>
<div class="t m" style="left:828.80px;top:730px;font-size:26px;line-height:26px;letter-spacing:-1.1525px;color:#b02a2a;">_timestamp:</div>
<div class="t m" style="left:997.05px;top:730px;font-size:26px;line-height:26px;letter-spacing:-1.1525px;color:#111;">1755804974028418,</div>
<svg class="a" style="left:797.8px;top:778.3999999999999px;" width="11" height="5.8" viewBox="0 0 20 10"><path d="M0 0h20L10 10z" fill="#111"/></svg>
<div class="t m" style="left:828.80px;top:768px;font-size:26px;line-height:26px;letter-spacing:-1.1525px;color:#b02a2a;">body:</div>
<div class="t m" style="left:910.35px;top:768px;font-size:26px;line-height:26px;letter-spacing:-1.1525px;color:#111;">DEBUG [Native–Transport–Requests–1] 2025–08–22 01:06:13,944 HeapUtils.java:133 – Heap dump creation on uncaught exceptions is disabled.,</div>
<svg class="a" style="left:797.8px;top:816.1999999999999px;" width="11" height="5.8" viewBox="0 0 20 10"><path d="M0 0h20L10 10z" fill="#111"/></svg>
<div class="t m" style="left:828.80px;top:806px;font-size:26px;line-height:26px;letter-spacing:-1.1525px;color:#b02a2a;">dropped_attributes_count:</div>
<div class="t m" style="left:1199.35px;top:806px;font-size:26px;line-height:26px;letter-spacing:-1.1525px;color:#111;">0,</div>
<svg class="a" style="left:797.8px;top:853.9999999999999px;" width="11" height="5.8" viewBox="0 0 20 10"><path d="M0 0h20L10 10z" fill="#111"/></svg>
<div class="t m" style="left:828.80px;top:844px;font-size:26px;line-height:26px;letter-spacing:-1.1525px;color:#b02a2a;">log_file_name:</div>
<div class="t m" style="left:1040.40px;top:844px;font-size:26px;line-height:26px;letter-spacing:-1.1525px;color:#111;">debug.log,</div>
<svg class="a" style="left:797.8px;top:891.8px;" width="11" height="5.8" viewBox="0 0 20 10"><path d="M0 0h20L10 10z" fill="#111"/></svg>
<div class="t m" style="left:828.80px;top:882px;font-size:26px;line-height:26px;letter-spacing:-1.1525px;color:#b02a2a;">severity:</div>
<div class="t m" style="left:968.15px;top:882px;font-size:26px;line-height:26px;letter-spacing:-1.1525px;color:#111;">0</div>
<div class="t m" style="left:767.50px;top:919px;font-size:26px;line-height:26px;letter-spacing:-1.1525px;color:#111;">}</div>
<div class="a" style="left:735px;top:958px;width:2289px;height:2px;background:#e4e4ea;"></div>
<svg class="a" style="left:762px;top:973.1px;" width="12" height="16" viewBox="0 0 12 16"><path d="M2.800 2.100L8.700 8l-5.900 5.900" fill="none" stroke="#111" stroke-width="2.300"/></svg><div class="t m" style="left:794.50px;top:969px;font-size:26px;line-height:26px;letter-spacing:-1.1525px;color:#111;">2025–08–22 01:06:04.228</div><div class="t m" style="left:1270.20px;top:969px;font-size:26px;line-height:26px;letter-spacing:-1.1525px;color:#111;">{"_timestamp":1755804964228461,"body":"DEBUG [Native–Transport–Requests–1] 2025–08–22 01:06:04,033 HeapUtils.java:133 – Heap dump creation on uncaught exceptions is disabled.","dropped_attributes_count":0,"log_file_name":"debug.log","severity":0}</div>
<div class="a" style="left:735px;top:1001.7px;width:2289px;height:2px;background:#e4e4ea;"></div>
<svg class="a" style="left:762px;top:1016.83px;" width="12" height="16" viewBox="0 0 12 16"><path d="M2.800 2.100L8.700 8l-5.900 5.900" fill="none" stroke="#111" stroke-width="2.300"/></svg><div class="t m" style="left:794.50px;top:1012px;font-size:26px;line-height:26px;letter-spacing:-1.1525px;color:#111;">2025–08–22 01:05:53.028</div><div class="t m" style="left:1270.20px;top:1012px;font-size:26px;line-height:26px;letter-spacing:-1.1525px;color:#111;">{"_timestamp":1755804953028425,"body":"DEBUG [ScheduledTasks:1] 2025–08–22 01:05:52,955 MigrationCoordinator.java:269 – Pulling unreceived schema versions...","dropped_attributes_count":0,"log_file_name":"debug.log","severity":0}</div>
<div class="a" style="left:735px;top:1045.43px;width:2289px;height:2px;background:#e4e4ea;"></div>
<svg class="a" style="left:762px;top:1060.56px;" width="12" height="16" viewBox="0 0 12 16"><path d="M2.800 2.100L8.700 8l-5.900 5.900" fill="none" stroke="#111" stroke-width="2.300"/></svg><div class="t m" style="left:794.50px;top:1056px;font-size:26px;line-height:26px;letter-spacing:-1.1525px;color:#111;">2025–08–22 01:05:51.828</div><div class="t m" style="left:1270.20px;top:1056px;font-size:26px;line-height:26px;letter-spacing:-1.1525px;color:#111;">{"_timestamp":1755804951828346,"body":"DEBUG [Native–Transport–Requests–1] 2025–08–22 01:05:51,632 HeapUtils.java:133 – Heap dump creation on uncaught exceptions is disabled.","dropped_attributes_count":0,"log_file_name":"debug.log","severity":0}</div>
<div class="a" style="left:735px;top:1089.16px;width:2289px;height:2px;background:#e4e4ea;"></div>
<svg class="a" style="left:762px;top:1104.29px;" width="12" height="16" viewBox="0 0 12 16"><path d="M2.800 2.100L8.700 8l-5.900 5.900" fill="none" stroke="#111" stroke-width="2.300"/></svg><div class="t m" style="left:794.50px;top:1100px;font-size:26px;line-height:26px;letter-spacing:-1.1525px;color:#111;">2025–08–22 01:05:46.428</div><div class="t m" style="left:1270.20px;top:1100px;font-size:26px;line-height:26px;letter-spacing:-1.1525px;color:#111;">{"_timestamp":1755804946428523,"body":"DEBUG [Native–Transport–Requests–1] 2025–08–22 01:05:46,317 HeapUtils.java:133 – Heap dump creation on uncaught exceptions is disabled.","dropped_attributes_count":0,"log_file_name":"debug.log","severity":0}</div>
<div class="a" style="left:735px;top:1132.89px;width:2289px;height:2px;background:#e4e4ea;"></div>
<svg class="a" style="left:762px;top:1148.02px;" width="12" height="16" viewBox="0 0 12 16"><path d="M2.800 2.100L8.700 8l-5.900 5.900" fill="none" stroke="#111" stroke-width="2.300"/></svg><div class="t m" style="left:794.50px;top:1143px;font-size:26px;line-height:26px;letter-spacing:-1.1525px;color:#111;">2025–08–22 01:05:40.427</div><div class="t m" style="left:1270.20px;top:1143px;font-size:26px;line-height:26px;letter-spacing:-1.1525px;color:#111;">{"_timestamp":1755804940427284,"body":"DEBUG [nioEventLoopGroup–5–7] 2025–08–22 01:05:40,297 HeapUtils.java:133 – Heap dump creation on uncaught exceptions is disabled.","dropped_attributes_count":0,"log_file_name":"debug.log","severity":0}</div>
<div class="a" style="left:735px;top:1176.6200000000001px;width:2289px;height:2px;background:#e4e4ea;"></div>
<div class="a" style="left:735px;top:1178.15px;width:2289px;height:43.7px;background:#f3f3f3;"></div><svg class="a" style="left:762px;top:1191.75px;" width="12" height="16" viewBox="0 0 12 16"><path d="M2.800 2.100L8.700 8l-5.900 5.900" fill="none" stroke="#111" stroke-width="2.300"/></svg><div class="t m" style="left:794.50px;top:1187px;font-size:26px;line-height:26px;letter-spacing:-1.1525px;color:#111;">2025–08–22 01:05:40.427</div><div class="t m" style="left:1270.20px;top:1187px;font-size:26px;line-height:26px;letter-spacing:-1.1525px;color:#111;">{"_timestamp":1755804940427284,"body":"DEBUG [nioEventLoopGroup–5–7] 2025–08–22 01:05:40,298 HeapUtils.java:133 – Heap dump creation on uncaught exceptions is disabled.","dropped_attributes_count":0,"log_file_name":"debug.log","severity":0}</div>
<div class="a" style="left:735px;top:1220.3500000000001px;width:2289px;height:2px;background:#e4e4ea;"></div>
<svg class="a" style="left:762px;top:1235.48px;" width="12" height="16" viewBox="0 0 12 16"><path d="M2.800 2.100L8.700 8l-5.900 5.900" fill="none" stroke="#111" stroke-width="2.300"/></svg><div class="t m" style="left:794.50px;top:1231px;font-size:26px;line-height:26px;letter-spacing:-1.1525px;color:#111;">2025–08–22 01:05:40.427</div><div class="t m" style="left:1270.20px;top:1231px;font-size:26px;line-height:26px;letter-spacing:-1.1525px;color:#111;">{"_timestamp":1755804940427283,"body":"DEBUG [nioEventLoopGroup–5–6] 2025–08–22 01:05:40,294 HeapUtils.java:133 – Heap dump creation on uncaught exceptions is disabled.","dropped_attributes_count":0,"log_file_name":"debug.log","severity":0}</div>
<div class="a" style="left:735px;top:1264.0800000000002px;width:2289px;height:2px;background:#e4e4ea;"></div>
<svg class="a" style="left:762px;top:1279.2099999999998px;" width="12" height="16" viewBox="0 0 12 16"><path d="M2.800 2.100L8.700 8l-5.900 5.900" fill="none" stroke="#111" stroke-width="2.300"/></svg><div class="t m" style="left:794.50px;top:1275px;font-size:26px;line-height:26px;letter-spacing:-1.1525px;color:#111;">2025–08–22 01:05:40.427</div><div class="t m" style="left:1270.20px;top:1275px;font-size:26px;line-height:26px;letter-spacing:-1.1525px;color:#111;">{"_timestamp":1755804940427277,"body":"DEBUG [nioEventLoopGroup–5–6] 2025–08–22 01:05:40,294 HeapUtils.java:133 – Heap dump creation on uncaught exceptions is disabled.","dropped_attributes_count":0,"log_file_name":"debug.log","severity":0}</div>
<div class="a" style="left:735px;top:1307.81px;width:2289px;height:2px;background:#e4e4ea;"></div>
<svg class="a" style="left:762px;top:1322.9399999999998px;" width="12" height="16" viewBox="0 0 12 16"><path d="M2.800 2.100L8.700 8l-5.900 5.900" fill="none" stroke="#111" stroke-width="2.300"/></svg><div class="t m" style="left:794.50px;top:1318px;font-size:26px;line-height:26px;letter-spacing:-1.1525px;color:#111;">2025–08–22 01:05:30.033</div><div class="t m" style="left:1270.20px;top:1318px;font-size:26px;line-height:26px;letter-spacing:-1.1525px;color:#111;">{"_timestamp":1755804930033924,"body":"DEBUG [ScheduledTasks:1] 2025–08–22 01:03:52,804 MigrationCoordinator.java:269 – Pulling unreceived schema versions...","dropped_attributes_count":0,"log_file_name":"debug.log","severity":0}</div>
<div class="a" style="left:735px;top:1351.54px;width:2289px;height:2px;background:#e4e4ea;"></div>
<svg class="a" style="left:762px;top:1366.6699999999998px;" width="12" height="16" viewBox="0 0 12 16"><path d="M2.800 2.100L8.700 8l-5.900 5.900" fill="none" stroke="#111" stroke-width="2.300"/></svg><div class="t m" style="left:794.50px;top:1362px;font-size:26px;line-height:26px;letter-spacing:-1.1525px;color:#111;">2025–08–22 01:05:30.033</div><div class="t m" style="left:1270.20px;top:1362px;font-size:26px;line-height:26px;letter-spacing:-1.1525px;color:#111;">{"_timestamp":1755804930033924,"body":"DEBUG [ScheduledTasks:1] 2025–08–22 01:04:52,880 MigrationCoordinator.java:269 – Pulling unreceived schema versions...","dropped_attributes_count":0,"log_file_name":"debug.log","severity":0}</div>
<div class="a" style="left:735px;top:1395.27px;width:2289px;height:2px;background:#e4e4ea;"></div>
<svg class="a" style="left:762px;top:1410.3999999999999px;" width="12" height="16" viewBox="0 0 12 16"><path d="M2.800 2.100L8.700 8l-5.900 5.900" fill="none" stroke="#111" stroke-width="2.300"/></svg><div class="t m" style="left:794.50px;top:1406px;font-size:26px;line-height:26px;letter-spacing:-1.1525px;color:#111;">2025–08–22 01:05:30.033</div><div class="t m" style="left:1270.20px;top:1406px;font-size:26px;line-height:26px;letter-spacing:-1.1525px;color:#111;">{"_timestamp":1755804930033924,"body":"DEBUG [ScheduledTasks:1] 2025–08–22 01:01:52,697 MigrationCoordinator.java:269 – Pulling unreceived schema versions...","dropped_attributes_count":0,"log_file_name":"debug.log","severity":0}</div>
<div class="a" style="left:735px;top:1439.0px;width:2289px;height:2px;background:#e4e4ea;"></div>
<svg class="a" style="left:762px;top:1454.1299999999999px;" width="12" height="16" viewBox="0 0 12 16"><path d="M2.800 2.100L8.700 8l-5.900 5.900" fill="none" stroke="#111" stroke-width="2.300"/></svg><div class="t m" style="left:794.50px;top:1450px;font-size:26px;line-height:26px;letter-spacing:-1.1525px;color:#111;">2025–08–22 01:05:30.033</div><div class="t m" style="left:1270.20px;top:1450px;font-size:26px;line-height:26px;letter-spacing:-1.1525px;color:#111;">{"_timestamp":1755804930033924,"body":"DEBUG [ScheduledTasks:1] 2025–08–22 01:02:52,733 MigrationCoordinator.java:269 – Pulling unreceived schema versions...","dropped_attributes_count":0,"log_file_name":"debug.log","severity":0}</div>
<div class="a" style="left:735px;top:1482.73px;width:2289px;height:2px;background:#e4e4ea;"></div>
<svg class="a" style="left:762px;top:1497.86px;" width="12" height="16" viewBox="0 0 12 16"><path d="M2.800 2.100L8.700 8l-5.900 5.900" fill="none" stroke="#111" stroke-width="2.300"/></svg><div class="t m" style="left:794.50px;top:1493px;font-size:26px;line-height:26px;letter-spacing:-1.1525px;color:#111;">2025–08–22 01:05:30.033</div><div class="t m" style="left:1270.20px;top:1493px;font-size:26px;line-height:26px;letter-spacing:-1.1525px;color:#111;">{"_timestamp":1755804930033923,"body":"])]","dropped_attributes_count":0,"log_file_name":"debug.log","severity":0}</div>
<div class="a" style="left:735px;top:1526.46px;width:2289px;height:2px;background:#e4e4ea;"></div>
<svg class="a" style="left:762px;top:1541.59px;" width="12" height="16" viewBox="0 0 12 16"><path d="M2.800 2.100L8.700 8l-5.900 5.900" fill="none" stroke="#111" stroke-width="2.300"/></svg><div class="t m" style="left:794.50px;top:1537px;font-size:26px;line-height:26px;letter-spacing:-1.1525px;color:#111;">2025–08–22 01:05:30.033</div><div class="t m" style="left:1270.20px;top:1537px;font-size:26px;line-height:26px;letter-spacing:-1.1525px;color:#111;">{"_timestamp":1755804930033923,"body":"DEBUG [ScheduledTasks:1] 2025–08–22 00:59:52,548 MigrationCoordinator.java:269 – Pulling unreceived schema versions...","dropped_attributes_count":0,"log_file_name":"debug.log","severity":0}</div>
<div class="a" style="left:735px;top:1570.19px;width:2289px;height:2px;background:#e4e4ea;"></div>
<svg class="a" style="left:762px;top:1585.3199999999997px;" width="12" height="16" viewBox="0 0 12 16"><path d="M2.800 2.100L8.700 8l-5.900 5.900" fill="none" stroke="#111" stroke-width="2.300"/></svg><div class="t m" style="left:794.50px;top:1581px;font-size:26px;line-height:26px;letter-spacing:-1.1525px;color:#111;">2025–08–22 01:05:30.033</div><div class="t m" style="left:1270.20px;top:1581px;font-size:26px;line-height:26px;letter-spacing:-1.1525px;color:#111;">{"_timestamp":1755804930033923,"body":"DEBUG [ScheduledTasks:1] 2025–08–22 01:00:52,625 MigrationCoordinator.java:269 – Pulling unreceived schema versions...","dropped_attributes_count":0,"log_file_name":"debug.log","severity":0}</div>
<div class="a" style="left:735px;top:1613.9199999999998px;width:2289px;height:2px;background:#e4e4ea;"></div>
<svg class="a" style="left:762px;top:1629.0499999999997px;" width="12" height="16" viewBox="0 0 12 16"><path d="M2.800 2.100L8.700 8l-5.900 5.900" fill="none" stroke="#111" stroke-width="2.300"/></svg><div class="t m" style="left:794.50px;top:1624px;font-size:26px;line-height:26px;letter-spacing:-1.1525px;color:#111;">2025–08–22 01:05:30.033</div><div class="t m" style="left:1270.20px;top:1624px;font-size:26px;line-height:26px;letter-spacing:-1.1525px;color:#111;">{"_timestamp":1755804930033922,"body":"Row[info=[ts=1755804581372000] del=deletedAt=1755804581371999, localDeletion=1755804581 ]: table_name=roles</div>
<div class="a" style="left:735px;top:1657.6499999999999px;width:2289px;height:2px;background:#e4e4ea;"></div>
</div></div>
</div></body></html>
